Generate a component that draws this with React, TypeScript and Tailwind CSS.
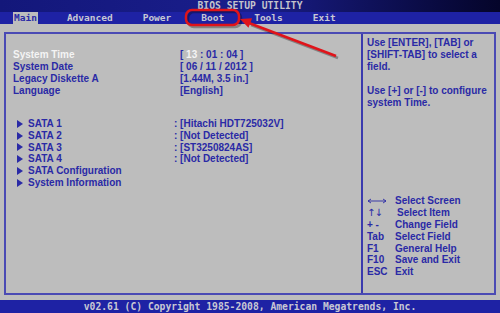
import React from "react";

const mono = "font-['DejaVu_Sans_Mono',monospace] font-bold";

function Arrow() {
  return (
    <svg width="6" height="8" viewBox="0 0 6 8" className="shrink-0">
      <polygon points="0,0 6,4 0,8" fill="#2a2aa6" />
    </svg>
  );
}

const settings = [
  { label: "System Date", value: "[ 06 / 11 / 2012 ]" },
  { label: "Legacy Diskette A", value: "[1.44M, 3.5 in.]" },
  { label: "Language", value: "[English]" },
];

const drives = [
  { label: "SATA 1", value: "[Hitachi HDT725032V]" },
  { label: "SATA 2", value: "[Not Detected]" },
  { label: "SATA 3", value: "[ST3250824AS]" },
  { label: "SATA 4", value: "[Not Detected]" },
  { label: "SATA Configuration" },
  { label: "System Information" },
];

const keys = [
  { key: "lr", desc: "Select Screen" },
  { key: "ud", desc: "Select Item" },
  { key: "+ -", desc: "Change Field" },
  { key: "Tab", desc: "Select Field" },
  { key: "F1", desc: "General Help" },
  { key: "F10", desc: "Save and Exit" },
  { key: "ESC", desc: "Exit" },
];

const tabs = ["Main", "Advanced", "Power", "Boot", "Tools", "Exit"];

export default function App() {
  return (
    <div className="relative w-[500px] h-[313px] overflow-hidden bg-[#bdbdbd] flex flex-col font-['Liberation_Sans',Arial,sans-serif] font-bold text-[10px] leading-[12px] text-[#2a2aa6]">
      {/* title bar */}
      <div className={`h-[12px] bg-gradient-to-r from-[#13177a] via-[#1a1e8c] to-[#05052a] text-center text-[9.7px] leading-[12px] text-[#c4c4cc] ${mono}`}>
        BIOS SETUP UTILITY
      </div>

      {/* tabs */}
      <div className={`h-[12px] bg-[#1e22a4] flex items-stretch pl-[13px] gap-[28px] text-[9.5px] leading-[12px] text-[#c8c8d4] ${mono}`}>
        {tabs.map((t, i) => (
          <span key={t} className={i === 0 ? "px-[1px] bg-[#bdbdbd] text-[#2a2aa6]" : "px-[1px]"}>
            {t}
          </span>
        ))}
      </div>

      {/* body */}
      <div className="flex-1 px-[4px] pt-[8px] pb-[5px] flex">
        <div className="flex-1 flex border-2 border-[#4a4ab4]">
          {/* left panel */}
          <div className="w-[355px] pl-[7px] pt-[15px]">
            <div className="flex">
              <span className="w-[167px] text-[#f4f4f4]">System Time</span>
              <span>
                [ <span className="text-[#f4f4f4]">13</span> : 01 : 04 ]
              </span>
            </div>
            {settings.map((s) => (
              <div key={s.label} className="flex">
                <span className="w-[167px]">{s.label}</span>
                <span>{s.value}</span>
              </div>
            ))}

            <div className="mt-[21px] leading-[11.75px]">
              {drives.map((d) => (
                <div key={d.label} className="flex items-center">
                  <div className="w-[161px] flex items-center pl-[4px] gap-[5px]">
                    <Arrow />
                    <span>{d.label}</span>
                  </div>
                  {d.value && <span>: {d.value}</span>}
                </div>
              ))}
            </div>
          </div>

          {/* right panel */}
          <div className="flex-1 border-l-2 border-[#3a3aae] pl-[4px] pt-[3px] pb-[15px] flex flex-col">
            <p>
              Use [ENTER], [TAB] or
              <br />
              [SHIFT-TAB] to select a
              <br />
              field.
            </p>
            <p className="mt-[12px]">
              Use [+] or [-] to configure
              <br />
              system Time.
            </p>

            <div className="mt-auto leading-[11.8px]">
              {keys.map((k) => (
                <div key={k.desc} className="flex items-center">
                  <span className="w-[28px] flex items-center">
                    {k.key === "lr" ? (
                      <svg width="20" height="6" viewBox="0 0 20 6">
                        <path d="M1 3h18M1 3l3-2M1 3l3 2M19 3l-3-2M19 3l-3 2" stroke="#2a2aa6" strokeWidth="0.9" fill="none" />
                      </svg>
                    ) : k.key === "ud" ? (
                      <span className="font-['DejaVu_Sans',sans-serif] font-normal text-[10px] tracking-[-1px]">↑↓</span>
                    ) : (
                      k.key
                    )}
                  </span>
                  <span className={k.key === "ud" ? "pl-[2px]" : ""}>{k.desc}</span>
                </div>
              ))}
            </div>
          </div>
        </div>
      </div>

      {/* footer */}
      <div className={`h-[13px] bg-[#1e22a4] text-center text-[9.7px] leading-[13px] text-[#c8c8d4] ${mono}`}>
        v02.61 (C) Copyright 1985-2008, American Megatrends, Inc.
      </div>

      {/* red annotation */}
      <svg className="absolute left-0 top-0 pointer-events-none" width="500" height="313" viewBox="0 0 500 313">
        <g transform="translate(2,2)" opacity="0.3">
          <rect x="186" y="10" width="53" height="15" rx="6" fill="none" stroke="#000" strokeWidth="2.5" />
          <line x1="336" y1="56" x2="249" y2="23" stroke="#000" strokeWidth="2.5" />
        </g>
        <rect x="186" y="10" width="53" height="15" rx="6" fill="none" stroke="#e0141a" strokeWidth="2.5" />
        <line x1="336" y1="56" x2="249" y2="23" stroke="#e0141a" strokeWidth="2.5" />
        <polygon points="240,19 248.5,27.7 252.1,18.3" fill="#e0141a" />
      </svg>
    </div>
  );
}
